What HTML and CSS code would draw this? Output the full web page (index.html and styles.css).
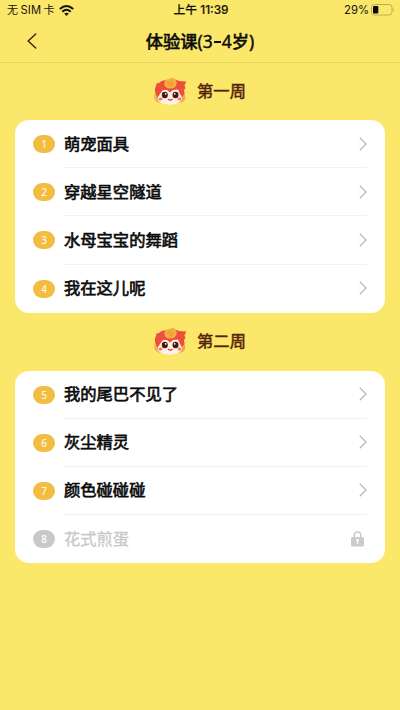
FILE: index.html
```html
<!DOCTYPE html>
<html lang="zh-CN">
<head>
<meta charset="utf-8">
<title>体验课(3-4岁)</title>
<link rel="stylesheet" href="styles.css">
</head>
<body>
<svg class="defs" width="0" height="0" aria-hidden="true">
  <symbol id="mascot" viewBox="0 0 34 28">
    <path fill="#f4b04c" d="M3 14Q0 19 2 23Q4 26 9 26L8 17Z"/>
    <path fill="#f3a94a" d="M29 13Q33 17 32 22.500Q30 26 25 26L25 17Z"/>
    <path fill="#ee4f3c" d="M2.500 16Q1 12 3 9L3.500 6.500 6 6Q9 2.500 14 3.500Q21 1.500 26 4L33.300 4.500 31.500 8.500 32.500 11 31 13 31.500 17 29 20 25 24H8L4 20Z"/>
    <path fill="#fff1e6" d="M7 17 10 13 14 13 17 15.500 20 13 25 12.500 27 17Q32 23 25 26Q17 29.500 8 26Q2 23 7 17Z"/>
    <path fill="#f5ad3d" d="M11.500 7.500Q10.500 2.500 16 2Q18 2 19 .5Q24 2 23.700 6Q23.500 11.500 17 11.500Q12 11.500 11.500 7.500Z"/>
    <path fill="none" stroke="#e98b30" stroke-width=".8" d="M14 6.500Q18 4 20 6.500Q20 9 16.500 9"/>
    <ellipse cx="11.800" cy="18" rx="3" ry="3.200" fill="#4a1711"/>
    <ellipse cx="22.500" cy="18" rx="3" ry="3.200" fill="#4a1711"/>
    <circle cx="12.700" cy="16.800" r=".9" fill="#fff"/>
    <circle cx="21.700" cy="16.800" r=".9" fill="#fff"/>
    <ellipse cx="7.500" cy="22" rx="2" ry="1.600" fill="#f7776c"/>
    <ellipse cx="26.500" cy="22" rx="2" ry="1.600" fill="#f7776c"/>
    <path fill="none" stroke="#d63b32" stroke-width="1.200" stroke-linecap="round" d="M15.300 22.300Q17.300 23.800 19.300 22.300"/>
  </symbol>
  <symbol id="next" viewBox="0 0 8 14">
    <path fill="none" stroke="#b9b9b9" stroke-width="1.300" d="M.8.800 7 7 .8 13.200"/>
  </symbol>
</svg>
<header class="status">
  <div class="carrier"><span>无<b class="sim">SIM</b>卡</span>
    <svg class="wifi" viewBox="0 0 15 11"><g fill="none" stroke="#15150d" stroke-width="2"><path d="M.8 4.100Q7.500-2 14.200 4.100"/><path d="M3.300 6.700Q7.500 2.900 11.700 6.700"/></g><path fill="#15150d" d="M5.200 8.600Q7.500 6.700 9.800 8.600L7.500 11Z"/></svg>
  </div>
  <div class="time">上午 11:39</div>
  <div class="power"><span>29%</span>
    <svg class="battery" viewBox="0 0 24 12"><rect x=".5" y=".5" width="20.500" height="10.500" rx="2.800" fill="none" stroke="#b9ad5a"/><rect x="2" y="2" width="5.300" height="7.500" rx="1.200" fill="#080804"/><path fill="#aaa052" d="M22.200 3.900Q24 5.700 22.200 7.500Z"/></svg>
  </div>
</header>
<nav class="nav">
  <svg class="back" viewBox="0 0 10 16"><path fill="none" stroke="#4f210b" stroke-width="1.500" stroke-linecap="round" d="M8.700 1 1.200 8 8.700 15"/></svg>
  <h1>体验课<span class="age">(3<i class="dash"></i>4</span>岁<span class="age">)</span></h1>
</nav>
<main>
  <h2><svg class="mascot"><use href="#mascot"/></svg><span>第一周</span></h2>
  <ul class="card">
    <li><span class="num">1</span><div class="row"><span>萌宠面具</span><svg class="next"><use href="#next"/></svg></div></li>
    <li><span class="num">2</span><div class="row"><span>穿越星空隧道</span><svg class="next"><use href="#next"/></svg></div></li>
    <li><span class="num">3</span><div class="row"><span>水母宝宝的舞蹈</span><svg class="next"><use href="#next"/></svg></div></li>
    <li><span class="num">4</span><div class="row"><span>我在这儿呢</span><svg class="next"><use href="#next"/></svg></div></li>
  </ul>
  <h2><svg class="mascot"><use href="#mascot"/></svg><span>第二周</span></h2>
  <ul class="card">
    <li><span class="num">5</span><div class="row"><span>我的尾巴不见了</span><svg class="next"><use href="#next"/></svg></div></li>
    <li><span class="num">6</span><div class="row"><span>灰尘精灵</span><svg class="next"><use href="#next"/></svg></div></li>
    <li><span class="num">7</span><div class="row"><span>颜色碰碰碰</span><svg class="next"><use href="#next"/></svg></div></li>
    <li class="locked"><span class="num">8</span><div class="row"><span>花式煎蛋</span><svg class="lock" viewBox="0 0 13 16"><path fill="none" stroke="#cbcbcb" stroke-width="1.500" d="M3.200 7V4.200Q3.200 1 6.500 1T9.800 4.200V7"/><rect y="6" width="13" height="9.500" rx="1.500" fill="#cbcbcb"/><circle cx="6.500" cy="9.300" r="1.400" fill="#fff"/><path stroke="#fff" stroke-width="1.200" d="M6.500 9.500V13"/></svg></div></li>
  </ul>
</main>
</body>
</html>
```

FILE: styles.css
```css
* { box-sizing: border-box; }
body {
  margin: 0;
  height: 710px;
  background: #fbe76a;
  color: #0c0c0c;
  font-family: "Noto Sans CJK SC", sans-serif;
  overflow: hidden;
}
svg { display: block; flex: none; }
.defs { position: absolute; }
.status {
  display: grid;
  grid-template-columns: 1fr auto 1fr;
  align-items: center;
  height: 20px;
  padding: 0 5px 0 7px;
  font: 12px/18px Inter, "Noto Sans CJK SC", sans-serif;
  color: #15150d;
}
.carrier, .power { display: flex; align-items: center; }
.carrier { font-size: 11px; }
.carrier span { white-space: nowrap; }
.sim { font-weight: 400; font-size: 11.2px; letter-spacing: .1px; margin: 0 2.5px; }
.wifi { width: 15px; height: 11px; margin-left: 4px; }
.time { font-weight: 500; -webkit-text-stroke: .15px; font-size: 11.8px; }
.power { justify-content: flex-end; font-size: 11.3px; }
.battery { width: 24px; height: 12px; margin-left: 2px; }
.nav {
  display: grid;
  grid-template-columns: 27px 1fr 27px;
  align-items: center;
  height: 43px;
  border-bottom: 1px solid #e6d362;
}
.back { width: 10px; height: 16px; margin-left: 27px; }
h1 {
  margin: 0;
  text-align: center;
  font: 400 17.3px/24px "Noto Sans CJK SC", sans-serif;
  -webkit-text-stroke: .7px;
}
.age {
  font-family: "Noto Sans", sans-serif;
  font-size: 17.4px;
  -webkit-text-stroke: .4px;
}
.dash {
  display: inline-block;
  width: 7px;
  height: 1.7px;
  margin: 0 1px;
  vertical-align: 5.5px;
  background: currentColor;
}
h2 {
  display: flex;
  align-items: center;
  justify-content: center;
  gap: 10px;
  height: 57px;
  margin: 0;
  padding: 0 1px 2px 0;
  color: #55230b;
  font: 400 16.3px/24px "Noto Sans CJK SC", sans-serif;
  -webkit-text-stroke: .5px;
}
.card + h2 { height: 58px; }
h2 span, .row span { padding-bottom: 2px; }
.mascot { width: 34px; height: 28px; }
.card {
  list-style: none;
  margin: 0 15px;
  padding: 0 18px;
  height: 192.500px;
  border-radius: 14px;
  background: #fff;
}
li { display: flex; align-items: center; height: 48.200px; }
.num {
  flex: none;
  width: 22px;
  height: 18px;
  margin-right: 9px;
  border-radius: 9px;
  background: #f3bd42;
  color: #fff8df;
  text-align: center;
  font: 500 10px/18px "Noto Sans", sans-serif;
}
.row {
  flex: 1;
  display: flex;
  align-items: center;
  justify-content: space-between;
  height: 48.200px;
  border-bottom: 1px solid #f2f2f2;
  font-size: 16.3px;
  font-weight: 400;
  -webkit-text-stroke: .65px;
}
li:last-child .row { border-color: transparent; }
.next { width: 8px; height: 14px; }
.locked .num { background: #c8c8c8; color: #fff; }
.locked .row { color: #c8c8c8; -webkit-text-stroke: .3px; }
.lock { width: 13px; height: 16px; margin-right: 3px; }
```
